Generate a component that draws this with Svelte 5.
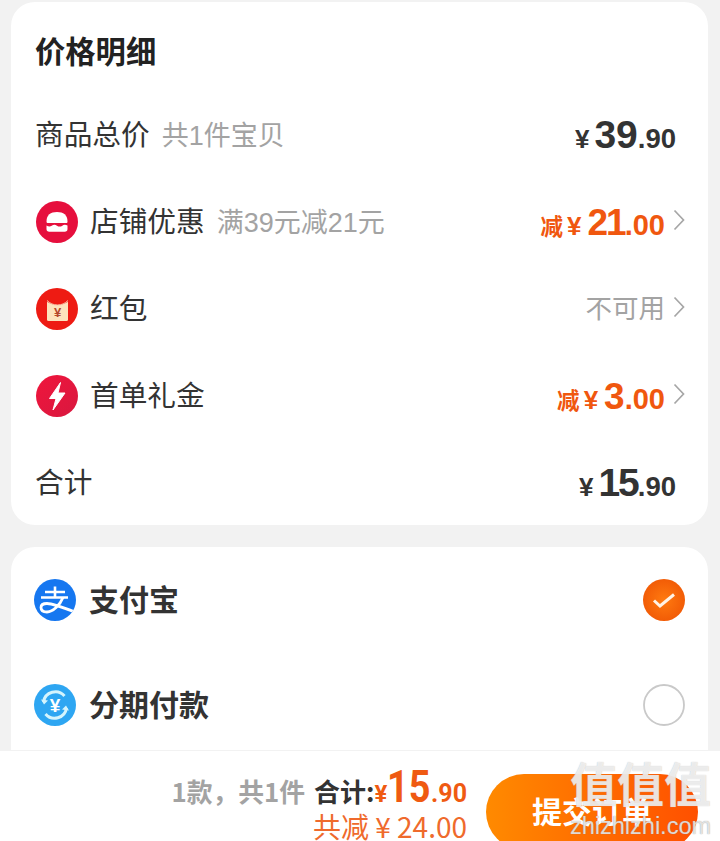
<script>
  const rows = [
    { label: "店铺优惠", sub: "满39元减21元", icon: "shop", cut: "21" },
    { label: "红包", icon: "packet", none: true },
    { label: "首单礼金", icon: "bolt", cut: "3" }
  ];
</script>

<div class="page">
  <div class="scroll">
    <section class="card detail">
      <h2>价格明细</h2>
      <div class="row">
        <span class="label">商品总价</span>
        <span class="sub">共1件宝贝</span>
        <span class="price dark"><i>¥</i><b>39</b><em>.90</em></span>
      </div>
      {#each rows as r}
        <div class="row">
          <svg class="icon" viewBox="0 0 42 42">
            {#if r.icon === "shop"}
              <circle cx="21" cy="21" r="21" fill="#e60f3d" />
              <path d="M10.500 20.500C10.500 14 14.500 11 21 11s10.500 3 10.500 9.500c0 1-.5 1.500-1.500 1.500H12c-1 0-1.500-.5-1.500-1.500z" fill="#fff" />
              <path d="M10.500 24.500c2 1.300 3.700 1.300 5.200.2 1.700-1.200 3.600-1.200 5.300 0 1.700 1.200 3.600 1.200 5.300 0 1.500-1.100 3.200-1.100 5.200-.2v3.500c0 1.800-1 2.800-2.800 2.800H13.300c-1.800 0-2.800-1-2.800-2.800z" fill="#fff" />
            {:else if r.icon === "packet"}
              <circle cx="21" cy="21" r="21" fill="#ee1b13" />
              <rect x="11" y="11" width="21" height="22" rx="1.500" fill="#fde3bd" />
              <path d="M9 7h25v5c-3.500 3.500-8 5-12.500 5S12.500 15.500 9 12z" fill="#ee1b13" />
              <path d="M11 12.500c3 3 6.500 4.500 10.500 4.500s7.500-1.500 10.500-4.500" fill="none" stroke="#f9c4aa" stroke-width="1" />
              <text x="21.500" y="29" text-anchor="middle" class="yen-mini">¥</text>
            {:else}
              <defs>
                <linearGradient id="boltbg" x1="0" y1="0" x2="1" y2="1">
                  <stop offset="0" stop-color="#f0153c" />
                  <stop offset="1" stop-color="#d8183f" />
                </linearGradient>
              </defs>
              <circle cx="21" cy="21" r="21" fill="url(#boltbg)" />
              <path d="M24.500 7.500 13.500 23.500h6.500l-3 11.500 12-17h-7z" fill="#fff" stroke="#fff" stroke-width="1" stroke-linejoin="round" />
            {/if}
          </svg>
          <span class="label">{r.label}</span>
          {#if r.sub}<span class="sub">{r.sub}</span>{/if}
          <span class="right">
            {#if r.none}
              <span class="none">不可用</span>
            {:else}
              <span class="price hot"><u>减</u><i>¥</i><b class:tight={r.cut === "21"}>{r.cut}</b><em>.00</em></span>
            {/if}
            <svg class="chev" viewBox="0 0 12 22"><path d="M1.500 1.500 10.500 11l-9 9.500" fill="none" stroke="#a6a6a6" stroke-width="1.700" /></svg>
          </span>
        </div>
      {/each}
      <div class="row">
        <span class="label">合计</span>
        <span class="price dark"><i>¥</i><b class="tight">15</b><em>.90</em></span>
      </div>
    </section>

    <section class="card pay">
      <div class="method">
        <svg class="icon" viewBox="0 0 42 42">
          <defs>
            <clipPath id="aliclip"><circle cx="21" cy="21" r="21" /></clipPath>
          </defs>
          <circle cx="21" cy="21" r="21" fill="#1677f0" />
          <g clip-path="url(#aliclip)" fill="none" stroke="#fff">
            <path d="M11 13h20M21 7.500V18M7 18.500h27" stroke-width="2.600" />
            <path d="M29 18.500C26 26 19 33 13 33c-4 0-6-2-6-4.500S9.500 24.500 13 24.500c6 0 15 3.500 29 9" stroke-width="2.800" />
          </g>
        </svg>
        <span class="name">支付宝</span>
        <svg class="radio" viewBox="0 0 42 42">
          <defs>
            <radialGradient id="checkbg">
              <stop offset="0" stop-color="#ff7a10" />
              <stop offset="1" stop-color="#f25c06" />
            </radialGradient>
          </defs>
          <circle cx="21" cy="21" r="21" fill="url(#checkbg)" />
          <path d="M11 21.500l6 5.500L31 15.500" fill="none" stroke="#fff3e6" stroke-width="3" />
        </svg>
      </div>
      <div class="method">
        <svg class="icon" viewBox="0 0 42 42">
          <circle cx="21" cy="21" r="21" fill="#2ea6f2" />
          <path d="M9.500 18a12 12 0 0 1 21-6M32.500 24a12 12 0 0 1-21 6" fill="none" stroke="#d4f4fd" stroke-width="3" />
          <path d="M7 15.500l3 5 4-4zM35 26.500l-3-5-4 4z" fill="#d4f4fd" />
          <text x="21" y="27.500" text-anchor="middle" class="yen-blue">¥</text>
        </svg>
        <span class="name">分期付款</span>
        <svg class="radio" viewBox="0 0 42 42">
          <circle cx="21" cy="21" r="20" fill="#fff" stroke="#c9c9c9" stroke-width="1.800" />
        </svg>
      </div>
    </section>
  </div>

  <footer class="bar">
    <div class="sum">
      <div class="line">
        <span class="count">1款，共1件</span>
        <span class="total">合计:</span>
        <span class="final"><i>¥</i><b>15</b><em>.90</em></span>
      </div>
      <div class="saved">共减 ¥ 24.00</div>
    </div>
    <button class="submit">提交订单</button>
  </footer>

  <div class="mark">
    <span class="mark-big">值值值</span>
    <span class="mark-url">zhizhizhi.com</span>
  </div>
</div>

<style>
  :global(body) {
    margin: 0;
    background: #f2f2f2;
  }
  .page {
    position: relative;
    width: 720px;
    height: 841px;
    overflow: hidden;
    display: flex;
    flex-direction: column;
    background: #f2f2f2;
    font-family: "Noto Sans CJK SC", "Liberation Sans", sans-serif;
    color: #333;
  }
  .scroll {
    flex: 1;
    min-height: 0;
    overflow: hidden;
    padding: 2px 12px 0 11px;
  }
  .card {
    background: #fff;
    border-radius: 24px;
  }
  .detail {
    padding: 0 32px 0 24px;
    height: 523px;
    box-sizing: border-box;
    margin-bottom: 22px;
  }
  h2 {
    margin: 0;
    height: 89px;
    padding-top: 26px;
    box-sizing: border-box;
    font-size: 30.300px;
    line-height: 44px;
    font-weight: 700;
    color: #222;
  }
  .row {
    height: 87px;
    display: flex;
    align-items: center;
  }
  .icon {
    width: 42px;
    height: 42px;
    flex: none;
    margin-right: 12px;
    margin-left: 1px;
  }
  .label {
    font-size: 28.700px;
    line-height: 40px;
    margin-bottom: 4px;
    color: #333;
  }
  .sub {
    font-family: "Liberation Sans", "Noto Sans CJK SC", sans-serif;
    font-size: 27px;
    line-height: 40px;
    margin-left: 12px;
    margin-top: 2px;
    color: #a3a3a3;
  }
  .right {
    margin-left: auto;
    margin-right: -9px;
    display: flex;
    align-items: center;
  }
  .none {
    font-size: 26.500px;
    margin-bottom: 4px;
    color: #a3a3a3;
  }
  .chev {
    width: 12px;
    height: 22px;
    margin-left: 8px;
    margin-top: -3px;
  }
  .price {
    font-family: "Liberation Sans", sans-serif;
    font-weight: 700;
    display: flex;
    align-items: baseline;
    white-space: nowrap;
    line-height: 40px;
    margin-top: 5px;
  }
  .row > .price {
    margin-left: auto;
  }
  .price i {
    font-style: normal;
    font-size: 26px;
    margin-right: 5px;
  }
  .price b {
    font-size: 39px;
  }
  .price .tight {
    letter-spacing: -2px;
  }
  .price em {
    font-style: normal;
    font-size: 27.500px;
  }
  .dark {
    color: #333;
  }
  .hot {
    color: #f0570f;
  }
  .hot u {
    text-decoration: none;
    font-family: "Noto Sans CJK SC", sans-serif;
    font-size: 22.500px;
    margin-right: 4px;
  }
  .hot i {
    margin-right: 6px;
  }
  .hot b {
    font-size: 37px;
  }
  .hot em {
    font-size: 29px;
  }
  .yen-mini {
    font: 700 13px "Liberation Sans", sans-serif;
    fill: #b5472c;
  }
  .yen-blue {
    font: 700 19px "Liberation Sans", sans-serif;
    fill: #fff;
  }
  .pay {
    padding: 0 23px;
    height: 240px;
  }
  .method {
    height: 104px;
    display: flex;
    align-items: center;
  }
  .method:first-child {
    height: 106px;
  }
  .method .icon {
    margin-right: 13px;
    margin-left: 0;
  }
  .name {
    font-size: 30px;
    font-weight: 700;
    margin-bottom: 4px;
    color: #333;
  }
  .radio {
    width: 42px;
    height: 42px;
    margin-left: auto;
  }
  .bar {
    position: relative;
    flex: none;
    height: 91px;
    background: #fff;
    border-top: 1px solid #f2f2f2;
    box-sizing: border-box;
    display: flex;
    justify-content: flex-end;
    padding-right: 22px;
  }
  .sum {
    margin-right: 19px;
    display: flex;
    flex-direction: column;
    align-items: flex-end;
    padding-top: 9px;
  }
  .line {
    display: flex;
    align-items: baseline;
    height: 52px;
    white-space: nowrap;
  }
  .count {
    font-size: 25.800px;
    font-weight: 700;
    color: #a3a3a3;
    margin-right: 9px;
  }
  .total {
    font-size: 26px;
    font-weight: 700;
    color: #333;
  }
  .final {
    color: #ef5a12;
    font-family: Roboto, sans-serif;
    font-weight: 700;
  }
  .final i {
    font-style: normal;
    font-size: 24px;
  }
  .final b {
    display: inline-block;
    font-size: 45px;
    font-weight: 700;
    transform: scaleX(0.84);
    transform-origin: left;
    margin-right: -8px;
  }
  .final em {
    font-style: normal;
    font-size: 25px;
  }
  .saved {
    font-size: 28px;
    line-height: 38px;
    margin-top: -5px;
    color: #ef6a2c;
    white-space: nowrap;
  }
  .submit {
    width: 212px;
    height: 76px;
    margin-top: 23px;
    border: 0;
    border-radius: 38px;
    padding: 0 0 4px;
    background: linear-gradient(90deg, #ff8a00, #ff5000);
    color: #fff;
    font: 700 30px "Noto Sans CJK SC", sans-serif;
    flex: none;
  }
  .mark {
    position: absolute;
    left: 570px;
    top: 752px;
    width: 142px;
    display: flex;
    flex-direction: column;
    pointer-events: none;
    color: rgba(255, 255, 255, 0.72);
  }
  .mark-big {
    font-size: 47px;
    font-weight: 700;
    line-height: 60px;
    text-shadow: 0 0 1px rgba(170, 170, 170, 0.8);
    white-space: nowrap;
  }
  .mark-url {
    font: 400 23.500px "Liberation Sans", sans-serif;
    line-height: 26px;
    margin-top: 1px;
    text-shadow: 0 0 1px rgba(130, 130, 130, 0.9);
    white-space: nowrap;
  }
</style>
